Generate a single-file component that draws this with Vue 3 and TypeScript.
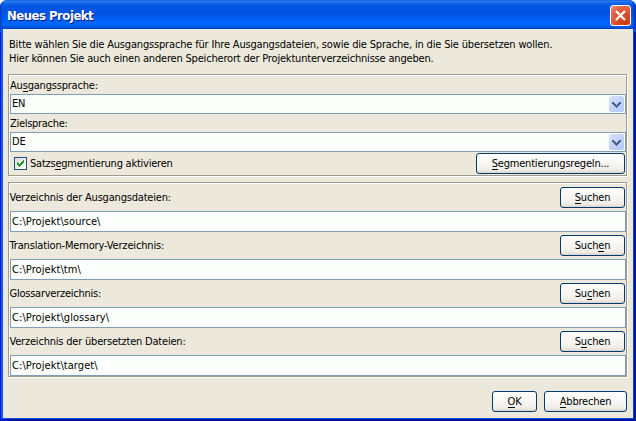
<script setup lang="ts">
import { reactive, ref } from 'vue'

interface Caption { before: string; key: string; after: string }
interface Language { id: string; label: Caption; value: string }
interface Directory { id: string; label: string; path: string; button: Caption }

const languages = reactive<Language[]>([
  { id: 'source', label: { before: 'Au', key: 's', after: 'gangssprache:' }, value: 'EN' },
  { id: 'target', label: { before: 'Zielsprache:', key: '', after: '' }, value: 'DE' },
])
const directories = reactive<Directory[]>([
  { id: 'd-source', label: 'Verzeichnis der Ausgangsdateien:', path: 'C:\\Projekt\\source\\', button: { before: '', key: 'S', after: 'uchen' } },
  { id: 'd-tm', label: 'Translation-Memory-Verzeichnis:', path: 'C:\\Projekt\\tm\\', button: { before: 'Such', key: 'e', after: 'n' } },
  { id: 'd-glossary', label: 'Glossarverzeichnis:', path: 'C:\\Projekt\\glossary\\', button: { before: 'Su', key: 'c', after: 'hen' } },
  { id: 'd-target', label: 'Verzeichnis der übersetzten Dateien:', path: 'C:\\Projekt\\target\\', button: { before: 'S', key: 'u', after: 'chen' } },
])
const segmentation = ref(true)
</script>

<template>
  <div class="window">
    <header class="titlebar">
      <h1 class="title">Neues Projekt</h1>
      <button class="close" type="button">
        <svg width="21" height="21" viewBox="0 0 21 21">
          <path d="M6 6 L15 15 M15 6 L6 15" stroke="#fff" stroke-width="2.3" fill="none" />
        </svg>
      </button>
    </header>
    <main class="body">
      <div class="intro">
        <p class="line1">Bitte wählen Sie die Ausgangssprache für Ihre Ausgangsdateien, sowie die Sprache, in die Sie übersetzen wollen.</p>
        <p class="line2">Hier können Sie auch einen anderen Speicherort der Projektunterverzeichnisse angeben.</p>
      </div>

      <section class="group languages">
        <template v-for="l in languages" :key="l.id">
          <div class="label" :class="l.id">{{ l.label.before }}<u v-if="l.label.key">{{ l.label.key }}</u>{{ l.label.after }}</div>
          <div class="combo">
            <span class="value">{{ l.value }}</span>
            <span class="arrow">
              <svg width="15" height="17" viewBox="0 0 15 17" shape-rendering="crispEdges">
                <path fill="#4d6185" d="M3 6h2v1h1v1h1v1h1v-1h1v-1h1v-1h2v2h-1v1h-1v1h-1v1h-1v1h-1v-1h-1v-1h-1v-1h-1v-1h-1z" />
              </svg>
            </span>
          </div>
        </template>
        <div class="seg-row">
          <div class="check" @click="segmentation = !segmentation">
            <span class="box">
              <svg v-if="segmentation" width="11" height="11" viewBox="0 0 11 11" shape-rendering="crispEdges">
                <path fill="#21a121" d="M2 4h1v1h1v1h1v-1h1v-1h1v-1h1v-1h1v3h-1v1h-1v1h-1v1h-1v1h-1v-1h-1v-1h-1z" />
              </svg>
            </span>
            <span class="check-text">Satzs<u>e</u>gmentierung aktivieren</span>
          </div>
          <button class="btn rules" type="button"><span><u>S</u>egmentierungsregeln...</span></button>
        </div>
      </section>

      <section class="group directories">
        <div v-for="d in directories" :key="d.id" class="directory">
          <div class="dir-head">
            <span class="dir-label" :class="d.id">{{ d.label }}</span>
            <button class="btn search" type="button"><span>{{ d.button.before }}<u>{{ d.button.key }}</u>{{ d.button.after }}</span></button>
          </div>
          <div class="field">{{ d.path }}</div>
        </div>
      </section>

      <footer class="actions">
        <button class="btn ok" type="button"><span><u>O</u>K</span></button>
        <button class="btn cancel" type="button"><span><u>A</u>bbrechen</span></button>
      </footer>
    </main>
  </div>
</template>

<style>
body { background: #fff; overflow: hidden; }
</style>

<style scoped>
* { box-sizing: border-box; }
.window {
  width: 636px; height: 421px; display: flex; flex-direction: column;
  font: 11px/14px "DejaVu Sans Condensed", "DejaVu Sans", sans-serif;
  font-stretch: condensed; letter-spacing: -0.2px;
  color: #000; background: #0054e3; border-radius: 7px 7px 0 0; overflow: hidden; white-space: pre;
}
.titlebar {
  height: 29px; flex: none; display: flex; justify-content: space-between; align-items: flex-start; padding: 5px 5px 0 7px;
  background: linear-gradient(90deg, #0040c8 0, transparent 3px, transparent 632px, #0030b0 636px),
    linear-gradient(#0753d4 0, #2c80f5 1px, #1765ec 3px, #0256e2 6px, #0254e1 13px, #0060f8 20px, #0267fd 25px, #0054e0 27px, #0041c4 29px);
}
.title {
  margin: 2px 0 0; font: bold 13px/18px "DejaVu Sans Condensed", sans-serif; font-stretch: condensed; color: #fff; text-shadow: 1px 1px #0a1883; letter-spacing: -0.5px;
}
.close {
  width: 21px; height: 21px; padding: 0; border: 1px solid #fff; border-radius: 3px; display: flex; align-items: center; justify-content: center; overflow: hidden;
  background: radial-gradient(circle at 80% 90%, #cc3a0c 0, #dc4c25 40%, #e5694b 75%, #eb9b82 100%);
}
.close svg { flex: none; }
.body {
  flex: 1; display: flex; flex-direction: column; background: #ece9dc; margin: 0 3px 3px; padding: 9px 5px 0;
  box-shadow: 0 1px 0 #0450e8, 1px 1px 0 #0148e0, -2px 1px 0 #0a5cf0, 3px 3px 0 #00139c, -3px 3px 0 #0019cf;
}
.intro { height: 36px; padding-left: 1px; }
p { margin: 0; }
.line1 { letter-spacing: -0.172px; }
.line2 { letter-spacing: -0.187px; }
.group {
  width: 619px; border: 1px solid #9d9c8c; padding: 1px 0 0 1px;
  box-shadow: inset 1px 1px 0 #fff, 1px 1px 0 #fff;
}
u { text-decoration: none; border-bottom: 1px solid #000; display: inline-block; height: 13px; line-height: 14px; vertical-align: top; }
.languages { height: 102px; }
.label { height: 18px; padding-top: 3px; }
.label.target { letter-spacing: -0.3px; }
.combo {
  width: 616px; height: 20px; display: flex; align-items: center; justify-content: space-between;
  border: 1px solid #7f9db9; background: #fcfffc; padding: 0 1px;
}
.arrow { width: 15px; height: 16px; border-radius: 2px; background: linear-gradient(135deg, #d9e4fe, #bccffc 60%, #b4c8f8); }
.arrow svg { display: block; }
.seg-row { display: flex; justify-content: space-between; width: 615px; padding: 1px 0 0 4px; }
.check { display: flex; align-items: center; gap: 3px; height: 21px; }
.check-text { letter-spacing: -0.23px; }
.box { width: 13px; height: 13px; border: 1px solid #1c5180; background: linear-gradient(135deg, #dcdcd7, #fff); }
.box svg { display: block; }
.btn {
  height: 21px; flex: none; border: 1px solid #003c74; border-radius: 3px; padding: 0; font: inherit; letter-spacing: inherit; color: #000;
  background: linear-gradient(#fff, #f5f4ef 60%, #efede6 85%, #d9d3c8); display: flex; align-items: center; justify-content: center; white-space: pre;
}
.rules { width: 149px; }
.search { width: 65px; }
.directories { height: 195px; margin-top: 6px; padding-top: 4px; display: flex; flex-direction: column; gap: 3px; }
.directory { width: 616px; display: flex; flex-direction: column; gap: 3px; }
.dir-head { display: flex; justify-content: space-between; align-items: center; padding-right: 1px; }
.dir-label { margin-left: -0.5px; }
.d-tm { letter-spacing: -0.16px; }
.d-glossary { letter-spacing: -0.24px; }
.field { height: 21px; border: 1px solid #7f9db9; background: #fcfffc; padding: 2px 0 0 1px; line-height: 15px; letter-spacing: 0.07px; }
.actions { display: flex; justify-content: flex-end; gap: 7px; margin-top: 14px; padding-right: 1px; }
.ok { width: 45px; }
.cancel { width: 83px; }
</style>
